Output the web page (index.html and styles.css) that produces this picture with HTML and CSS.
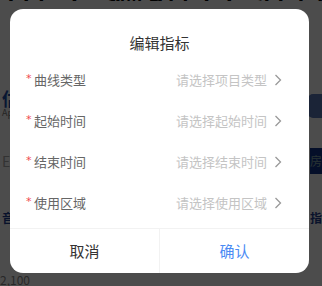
FILE: index.html
```html
<!DOCTYPE html>
<html lang="zh">
<head>
<meta charset="utf-8">
<link rel="stylesheet" href="styles.css">
</head>
<body>
<div class="page">
  <div class="hero">用于编辑各组件</div>
  <div class="info">
    <div class="info-left">
      <div class="info-title">估值</div>
      <div class="info-sub">App</div>
    </div>
    <div class="info-card"></div>
  </div>
  <div class="tabs">
    <div class="tab-icon">E</div>
    <div class="tab-bar">房</div>
  </div>
  <div class="links">
    <span class="link-a">音</span>
    <span class="link-b">指</span>
  </div>
  <div class="num">2,100</div>
</div>
<div class="mask"></div>
<div class="dialog">
  <div class="dialog-title">编辑指标</div>
  <div class="dialog-body">
    <div class="row">
      <span class="req">*</span><span class="label">曲线类型</span>
      <span class="value">请选择项目类型</span>
      <svg class="chev" width="8" height="12" viewBox="0 0 8 12"><path d="M1.5 1 L6.5 6 L1.5 11" fill="none" stroke="#999" stroke-width="1.3"/></svg>
    </div>
    <div class="row">
      <span class="req">*</span><span class="label">起始时间</span>
      <span class="value">请选择起始时间</span>
      <svg class="chev" width="8" height="12" viewBox="0 0 8 12"><path d="M1.5 1 L6.5 6 L1.5 11" fill="none" stroke="#999" stroke-width="1.3"/></svg>
    </div>
    <div class="row">
      <span class="req">*</span><span class="label">结束时间</span>
      <span class="value">请选择结束时间</span>
      <svg class="chev" width="8" height="12" viewBox="0 0 8 12"><path d="M1.5 1 L6.5 6 L1.5 11" fill="none" stroke="#999" stroke-width="1.3"/></svg>
    </div>
    <div class="row">
      <span class="req">*</span><span class="label">使用区域</span>
      <span class="value">请选择使用区域</span>
      <svg class="chev" width="8" height="12" viewBox="0 0 8 12"><path d="M1.5 1 L6.5 6 L1.5 11" fill="none" stroke="#999" stroke-width="1.3"/></svg>
    </div>
  </div>
  <div class="dialog-footer">
    <div class="btn cancel">取消</div>
    <div class="btn confirm">确认</div>
  </div>
</div>
</body>
</html>
```

FILE: styles.css
```css
html, body {
  margin: 0;
  padding: 0;
}
body {
  width: 322px;
  height: 286px;
  overflow: hidden;
  background: #fff;
  font-family: "Noto Sans CJK SC", "Noto Sans", sans-serif;
  position: relative;
}
.page {
  width: 322px;
  height: 286px;
  overflow: hidden;
  display: flex;
  flex-direction: column;
}
.hero {
  font-size: 44px;
  line-height: 44px;
  font-weight: normal;
  color: #000;
  margin-top: -35px;
  margin-left: 4px;
  white-space: nowrap;
  letter-spacing: 4px;
  overflow: hidden;
}
.info {
  display: flex;
  justify-content: space-between;
  margin-top: 87px;
  padding-left: 2px;
}
.info-title {
  font-size: 18px;
  line-height: 20px;
  font-weight: bold;
  color: #1d4ea8;
}
.info-sub {
  font-size: 9px;
  line-height: 10px;
  color: #777;
}
.info-card {
  width: 14px;
  height: 24px;
  margin-top: 6px;
  border-radius: 5px 0 0 5px;
  background: #5a78b8;
}
.tabs {
  display: flex;
  justify-content: space-between;
  align-items: center;
  margin-top: 30px;
}
.tab-icon {
  font-size: 14px;
  line-height: 16px;
  color: #aaa;
  margin-left: 2px;
}
.tab-bar {
  width: 12px;
  height: 26px;
  background: #12348a;
  color: #8aa;
  font-size: 12px;
  line-height: 26px;
  overflow: hidden;
}
.links {
  display: flex;
  justify-content: space-between;
  margin-top: 38px;
  font-size: 12px;
  line-height: 12px;
  font-weight: bold;
  color: #1d3d90;
}
.link-a { margin-left: 2px; }
.link-b { width: 12px; overflow: hidden; }
.num {
  margin-top: 50px;
  font-size: 12px;
  line-height: 12px;
  color: #888;
}
.mask {
  position: absolute;
  inset: 0;
  background: rgba(0, 0, 0, 0.7);
}
.dialog {
  position: absolute;
  top: 9px;
  left: 10px;
  width: 299px;
  height: 264px;
  background: #fff;
  border-radius: 13px;
  display: flex;
  flex-direction: column;
  overflow: hidden;
}
.dialog-title {
  padding-top: 24px;
  height: 20px;
  line-height: 20px;
  font-size: 15px;
  color: #333;
  text-align: center;
}
.dialog-body {
  padding: 6px 0 5px;
  display: flex;
  flex-direction: column;
}
.row {
  height: 41px;
  display: flex;
  align-items: center;
  padding: 0 27px 0 16px;
}
.req {
  color: #f0484e;
  font-size: 11px;
  width: 8px;
  line-height: 11px;
  margin-top: -3px;
  font-family: "DejaVu Sans", sans-serif;
}
.label {
  font-size: 13px;
  color: #666;
  line-height: 18px;
}
.value {
  margin-left: auto;
  font-size: 13px;
  color: #c4c4c4;
  line-height: 18px;
}
.chev {
  margin-left: 7px;
  display: block;
}
.dialog-footer {
  flex: 1;
  display: flex;
  border-top: 1px solid #f2f2f2;
}
.btn {
  flex: 1;
  display: flex;
  align-items: center;
  justify-content: center;
  font-size: 15px;
  padding-bottom: 2px;
}
.cancel {
  color: #333;
  border-right: 1px solid #f2f2f2;
}
.confirm {
  color: #4b8bf4;
}
```
